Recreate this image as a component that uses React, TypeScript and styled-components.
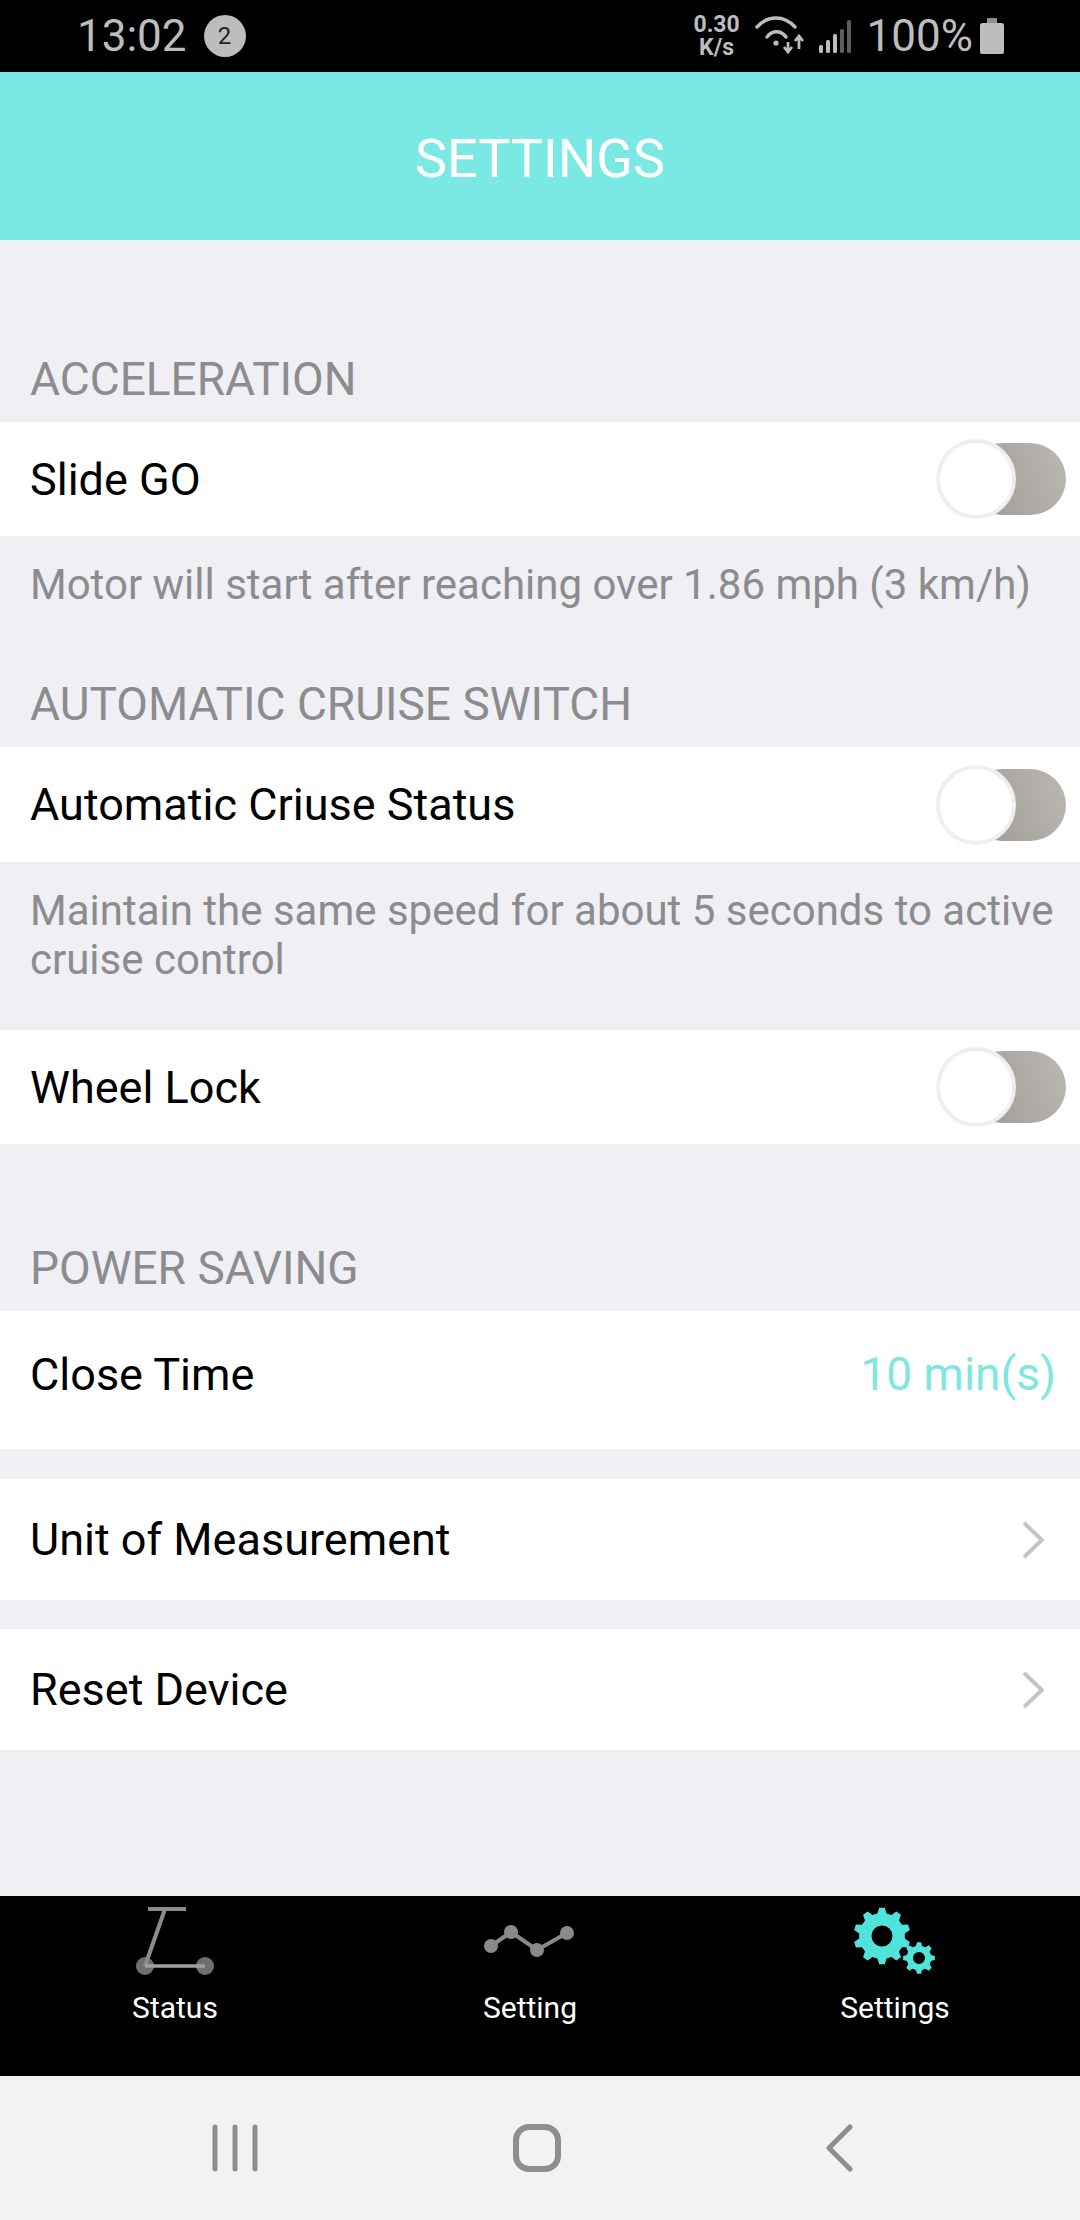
import React from "react";
import styled, { createGlobalStyle } from "styled-components";

const GlobalStyle = createGlobalStyle`
  html, body {
    margin: 0;
    padding: 0;
    background: #efeff4;
  }
  * {
    box-sizing: border-box;
  }
`;

const Page = styled.div`
  width: 1080px;
  height: 2220px;
  display: flex;
  flex-direction: column;
  font-family: Roboto, "Liberation Sans", sans-serif;
  background: #efeff4;
  overflow: hidden;
`;

const StatusBar = styled.div`
  height: 72px;
  flex: none;
  background: #000;
  color: #bdbdbd;
  display: flex;
  align-items: center;
  padding: 0 76px 0 77px;
`;

const Clock = styled.span`
  font-size: 44px;
  line-height: 72px;
`;

const Badge = styled.span`
  width: 42px;
  height: 42px;
  margin-left: 17px;
  border-radius: 50%;
  background: #bdbdbd;
  color: #222;
  font-size: 24px;
  display: flex;
  align-items: center;
  justify-content: center;
`;

const StatusRight = styled.div`
  margin-left: auto;
  display: flex;
  align-items: center;
`;

const Speed = styled.div`
  width: 50px;
  margin-right: 14px;
  font-size: 23px;
  font-weight: 700;
  line-height: 23px;
  text-align: center;
  color: #bdbdbd;
`;

const StatusIcon = styled.svg`
  display: block;
  flex: none;
  overflow: visible;
`;

const SignalGlyph = styled(StatusIcon)`
  margin-left: 13px;
`;

const BatteryText = styled.span`
  font-size: 44px;
  line-height: 72px;
  margin: 0 7px 0 15px;
`;

const Header = styled.header`
  height: 168px;
  flex: none;
  background: #7ae9e4;
  color: #fff;
  font-size: 54px;
  padding-top: 4px;
  display: flex;
  align-items: center;
  justify-content: center;
`;

const Content = styled.main`
  flex: 1;
  display: flex;
  flex-direction: column;
`;

const SectionLabel = styled.div<{ $top: number }>`
  margin-top: ${({ $top }) => $top}px;
  margin-bottom: 13px;
  height: 60px;
  padding-left: 30px;
  font-size: 46px;
  line-height: 60px;
  color: #8c8c8f;
`;

const Row = styled.div<{ $height: number; $top?: number; $lift?: number }>`
  height: ${({ $height }) => $height}px;
  margin-top: ${({ $top }) => $top ?? 0}px;
  background: #fff;
  display: flex;
  align-items: center;
  justify-content: space-between;
  padding: 0 14px ${({ $lift }) => $lift ?? 0}px 30px;
  flex: none;
`;

const RowTitle = styled.span`
  font-size: 45px;
  color: #000;
`;

const RowValue = styled.span`
  font-size: 46px;
  color: #7fe6e0;
  margin-right: 10px;
`;

const Hint = styled.p`
  margin: 0;
  padding: 24px 20px 0 30px;
  font-size: 42px;
  line-height: 49px;
  color: #8c8c8f;
`;

const Toggle = styled.div`
  position: relative;
  width: 130px;
  height: 80px;
`;

const ToggleTrack = styled.div`
  position: absolute;
  top: 4px;
  right: 0;
  width: 100px;
  height: 72px;
  border-radius: 36px;
  background: linear-gradient(70deg, #9b9692, #bcb9b5);
`;

const ToggleKnob = styled.div`
  position: absolute;
  top: 0;
  left: 0;
  width: 80px;
  height: 80px;
  border-radius: 50%;
  background: #fff;
  border: 4px solid #efefef;
`;

const Chevron = styled.svg`
  display: block;
  margin-right: 22px;
`;

const TabBar = styled.nav`
  height: 180px;
  flex: none;
  background: #000;
  display: grid;
  grid-template-columns: 350px 360px 370px;
`;

const Tab = styled.div`
  display: flex;
  flex-direction: column;
  align-items: center;
  padding-top: 9px;
`;

const TabIcon = styled.svg`
  display: block;
`;

const TabLabel = styled.span`
  margin-top: 13px;
  font-size: 30px;
  line-height: 36px;
  color: #fff;
`;

const SystemNav = styled.div`
  height: 144px;
  flex: none;
  background: #f2f2f2;
  display: grid;
  grid-template-columns: repeat(3, 302px);
  padding-left: 84px;
  align-items: center;
  justify-items: center;
`;

const NavIcon = styled.svg`
  display: block;
`;

// builds the outline of a cog, teeth as trapezoids around the rim
const gearPath = (cx: number, cy: number, outer: number, root: number, hole: number, teeth: number) => {
  const step = (Math.PI * 2) / teeth;
  const pts: string[] = [];
  for (let i = 0; i < teeth; i++) {
    const a = i * step - Math.PI / 2;
    const at = (r: number, t: number) =>
      `${(cx + r * Math.cos(t)).toFixed(2)} ${(cy + r * Math.sin(t)).toFixed(2)}`;
    pts.push(at(root, a - step * 0.32), at(outer, a - step * 0.16), at(outer, a + step * 0.16), at(root, a + step * 0.32));
  }
  const ring = `M${cx - hole} ${cy}a${hole} ${hole} 0 1 0 ${hole * 2} 0a${hole} ${hole} 0 1 0 ${-hole * 2} 0Z`;
  return `M${pts.join("L")}Z${ring}`;
};

const WifiIcon = () => (
  <StatusIcon width="50" height="36" viewBox="0 0 50 36" fill="none">
    <path d="M1 9C12 -3 28 -3 39 9" stroke="#bdbdbd" strokeWidth="3.4" strokeLinecap="round" />
    <path d="M11 19C16 12 25 12 30 19" stroke="#bdbdbd" strokeWidth="3.4" strokeLinecap="round" />
    <circle cx="20" cy="25" r="2.6" fill="#bdbdbd" />
    <path d="M32 24v9M28 29l4 5 4-5" stroke="#bdbdbd" strokeWidth="2.8" />
    <path d="M43 31V19M39 23l4-5 4 5" stroke="#bdbdbd" strokeWidth="2.8" />
  </StatusIcon>
);

const SignalIcon = () => (
  <SignalGlyph width="33" height="33" viewBox="0 0 33 33">
    <rect x="0" y="25" width="4" height="8" rx="1.5" fill="#bdbdbd" />
    <rect x="7" y="20" width="4" height="13" rx="1.5" fill="#bdbdbd" />
    <rect x="14" y="14" width="4" height="19" rx="1.5" fill="#bdbdbd" />
    <rect x="21" y="9" width="4" height="24" rx="1.5" fill="#5e5e5e" />
    <rect x="28" y="0" width="4" height="33" rx="1.5" fill="#5e5e5e" />
  </SignalGlyph>
);

const BatteryIcon = () => (
  <StatusIcon width="24" height="36" viewBox="0 0 24 36">
    <rect x="7" y="0" width="10" height="6" rx="1" fill="#8f8f8f" />
    <rect x="0" y="5" width="24" height="31" rx="2.5" fill="#bdbdbd" />
  </StatusIcon>
);

const SwitchControl = () => (
  <Toggle>
    <ToggleTrack />
    <ToggleKnob />
  </Toggle>
);

const RowChevron = () => (
  <Chevron width="22" height="38" viewBox="0 0 22 38" fill="none">
    <path d="M2 2l18 17L2 36" stroke="#c4c4c4" strokeWidth="4" />
  </Chevron>
);

const ScooterIcon = () => (
  <TabIcon width="100" height="72" viewBox="0 0 100 72" fill="none">
    <circle cx="20" cy="61" r="9" fill="#6f6f6f" />
    <circle cx="80" cy="61" r="9" fill="#6f6f6f" />
    <path d="M23 4h38" stroke="#8c8c8c" strokeWidth="4" />
    <path d="M40 4L20 61" stroke="#8c8c8c" strokeWidth="4" />
    <path d="M20 61h60" stroke="#a0a0a0" strokeWidth="3.5" />
  </TabIcon>
);

const ChartIcon = () => (
  <TabIcon width="100" height="72" viewBox="0 0 100 72">
    <path d="M11 41L31 27L57 45L87 28" stroke="#8a8a8a" strokeWidth="4" fill="none" />
    <circle cx="11" cy="41" r="7" fill="#8a8a8a" />
    <circle cx="31" cy="27" r="7" fill="#8a8a8a" />
    <circle cx="57" cy="45" r="7" fill="#8a8a8a" />
    <circle cx="87" cy="28" r="7" fill="#8a8a8a" />
  </TabIcon>
);

const GearsIcon = () => (
  <TabIcon width="100" height="72" viewBox="0 0 100 72">
    <path d={gearPath(37, 31, 28.5, 23, 10.5, 10)} fill="#4fe3dc" fillRule="evenodd" />
    <path d={gearPath(74, 53, 16, 12.5, 6, 8)} fill="#4fe3dc" fillRule="evenodd" />
  </TabIcon>
);

const App = () => {
  return (
    <>
      <GlobalStyle />
      <Page>
        <StatusBar>
          <Clock>13:02</Clock>
          <Badge>2</Badge>
          <StatusRight>
            <Speed>
              0.30
              <br />
              K/s
            </Speed>
            <WifiIcon />
            <SignalIcon />
            <BatteryText>100%</BatteryText>
            <BatteryIcon />
          </StatusRight>
        </StatusBar>
        <Header>SETTINGS</Header>
        <Content>
          <SectionLabel $top={109}>ACCELERATION</SectionLabel>
          <Row $height={114}>
            <RowTitle>Slide GO</RowTitle>
            <SwitchControl />
          </Row>
          <Hint>Motor will start after reaching over 1.86 mph (3 km/h)</Hint>
          <SectionLabel $top={65}>AUTOMATIC CRUISE SWITCH</SectionLabel>
          <Row $height={115}>
            <RowTitle>Automatic Criuse Status</RowTitle>
            <SwitchControl />
          </Row>
          <Hint>Maintain the same speed for about 5 seconds to active cruise control</Hint>
          <Row $height={114} $top={46}>
            <RowTitle>Wheel Lock</RowTitle>
            <SwitchControl />
          </Row>
          <SectionLabel $top={94}>POWER SAVING</SectionLabel>
          <Row $height={138} $lift={12}>
            <RowTitle>Close Time</RowTitle>
            <RowValue>10 min(s)</RowValue>
          </Row>
          <Row $height={121} $top={30}>
            <RowTitle>Unit of Measurement</RowTitle>
            <RowChevron />
          </Row>
          <Row $height={121} $top={29}>
            <RowTitle>Reset Device</RowTitle>
            <RowChevron />
          </Row>
        </Content>
        <TabBar>
          <Tab>
            <ScooterIcon />
            <TabLabel>Status</TabLabel>
          </Tab>
          <Tab>
            <ChartIcon />
            <TabLabel>Setting</TabLabel>
          </Tab>
          <Tab>
            <GearsIcon />
            <TabLabel>Settings</TabLabel>
          </Tab>
        </TabBar>
        <SystemNav>
          <NavIcon width="50" height="48" viewBox="0 0 50 48" fill="none">
            <path d="M5 3v42M25 3v42M45 3v42" stroke="#8e8e8e" strokeWidth="5" strokeLinecap="round" />
          </NavIcon>
          <NavIcon width="50" height="50" viewBox="0 0 50 50" fill="none">
            <rect x="4" y="4" width="42" height="42" rx="13" stroke="#8e8e8e" strokeWidth="6" />
          </NavIcon>
          <NavIcon width="30" height="48" viewBox="0 0 30 48" fill="none">
            <path d="M26 3L5 24l21 21" stroke="#8e8e8e" strokeWidth="5" strokeLinecap="round" strokeLinejoin="round" />
          </NavIcon>
        </SystemNav>
      </Page>
    </>
  );
};

export default App;
